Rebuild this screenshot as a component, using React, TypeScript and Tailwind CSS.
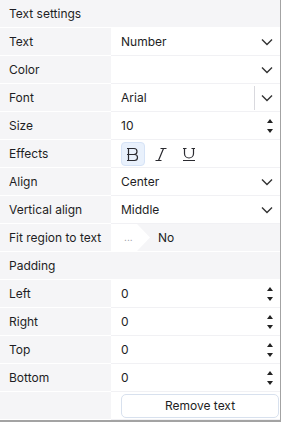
import { ReactNode } from 'react';

const font = { fontFamily: 'Inter, "Noto Sans", sans-serif' };

function Chevron({ divider = false }: { divider?: boolean }) {
  return (
    <div className="flex h-full items-center">
      {divider && <div className="mr-[6px] h-[24px] w-px bg-[#d9d9de]" />}
      <svg width="12" height="8" viewBox="0 0 12 8" className="mr-[7px]">
        <path d="M1 1.5 6 6.5 11 1.5" fill="none" stroke="#333" strokeWidth="1.4" />
      </svg>
    </div>
  );
}

function Spinner() {
  return (
    <div className="mr-[7px] flex flex-col items-center gap-[6px]">
      <svg width="6" height="4" viewBox="0 0 6 4">
        <path d="M3 0 6 4H0z" fill="#222" />
      </svg>
      <svg width="6" height="4" viewBox="0 0 6 4">
        <path d="M0 0h6L3 4z" fill="#222" />
      </svg>
    </div>
  );
}

function Row({ label, children }: { label: string; children?: ReactNode }) {
  return (
    <div className="flex h-[28px]">
      <div className="flex w-[111px] items-center border-b border-white bg-[#f5f5f7] pt-px pl-[9px]">{label}</div>
      <div className="flex flex-1 items-center justify-between border-b border-[#f1f1f4] bg-white pt-px pl-[10px]">
        {children}
      </div>
    </div>
  );
}

function FullRow({ label }: { label: string }) {
  return (
    <div className="flex h-[28px] items-center border-b border-white bg-[#f5f5f7] pt-px pl-[9px]">{label}</div>
  );
}

export default function App() {
  return (
    <div className="h-[422px] w-[282px] bg-white text-[12px] text-[#1e1e24]" style={font}>
      <div className="w-[281px] border-r border-b-2 border-[#a3a3a3]">
        <FullRow label="Text settings" />
        <Row label="Text">
          <span>Number</span>
          <Chevron />
        </Row>
        <Row label="Color">
          <span />
          <Chevron />
        </Row>
        <Row label="Font">
          <span>Arial</span>
          <Chevron divider />
        </Row>
        <Row label="Size">
          <span>10</span>
          <Spinner />
        </Row>
        <Row label="Effects">
          <div className="flex gap-[4px]">
            <button className="flex h-[24px] w-[24px] items-center justify-center rounded-[4px] border border-[#d6e3f6] bg-[#e9f1fc]">
              <svg width="16" height="16" viewBox="0 0 16 16" fill="none" stroke="#2a2a30" strokeWidth="1.2">
                <path d="M2 2.5h7a3 3 0 0 1 0 6H2M2 8.5h7.5a3 3 0 0 1 0 6H2M3.5 2.5v12" />
              </svg>
            </button>
            <button className="flex h-[24px] w-[24px] items-center justify-center">
              <svg width="16" height="16" viewBox="0 0 16 16" fill="none" stroke="#2a2a30" strokeWidth="1.2">
                <path d="M7.5 2.5h6M2.5 14.5h6M10.5 2.5 5.5 14.5" />
              </svg>
            </button>
            <button className="flex h-[24px] w-[24px] items-center justify-center">
              <svg width="16" height="16" viewBox="0 0 16 16" fill="none" stroke="#2a2a30" strokeWidth="1.2">
                <path d="M2 2.5h3.5M10.5 2.5H14M3.5 2.5v5a4.5 4.5 0 0 0 9 0v-5M2 14.5h12" />
              </svg>
            </button>
          </div>
        </Row>
        <Row label="Align">
          <span>Center</span>
          <Chevron />
        </Row>
        <Row label="Vertical align">
          <span>Middle</span>
          <Chevron />
        </Row>
        <div className="flex h-[28px] border-b border-white bg-[#f5f5f7]">
          <div className="flex w-[111px] items-center pt-px pl-[9px]">Fit region to text</div>
          <div className="flex flex-1 items-center">
            <div className="flex h-full w-[39px] items-center bg-white pl-[13px] text-[10px] text-[#9a9aa2] [clip-path:polygon(0_0,26px_0,39px_50%,26px_100%,0_100%)]">
              ...
            </div>
            <span className="ml-[8px] pt-px">No</span>
          </div>
        </div>
        <FullRow label="Padding" />
        <Row label="Left">
          <span>0</span>
          <Spinner />
        </Row>
        <Row label="Right">
          <span>0</span>
          <Spinner />
        </Row>
        <Row label="Top">
          <span>0</span>
          <Spinner />
        </Row>
        <Row label="Bottom">
          <span>0</span>
          <Spinner />
        </Row>
        <div className="flex h-[28px]">
          <div className="w-[111px] border-b border-white bg-[#f5f5f7]" />
          <div className="flex flex-1 items-center border-b border-[#f1f1f4] bg-white pl-[10px] pr-[1px]">
            <button className="h-[24px] flex-1 rounded-[5px] border border-[#d8e1ee] bg-white text-[12px] text-[#1e1e24]">
              Remove text
            </button>
          </div>
        </div>
      </div>
    </div>
  );
}
